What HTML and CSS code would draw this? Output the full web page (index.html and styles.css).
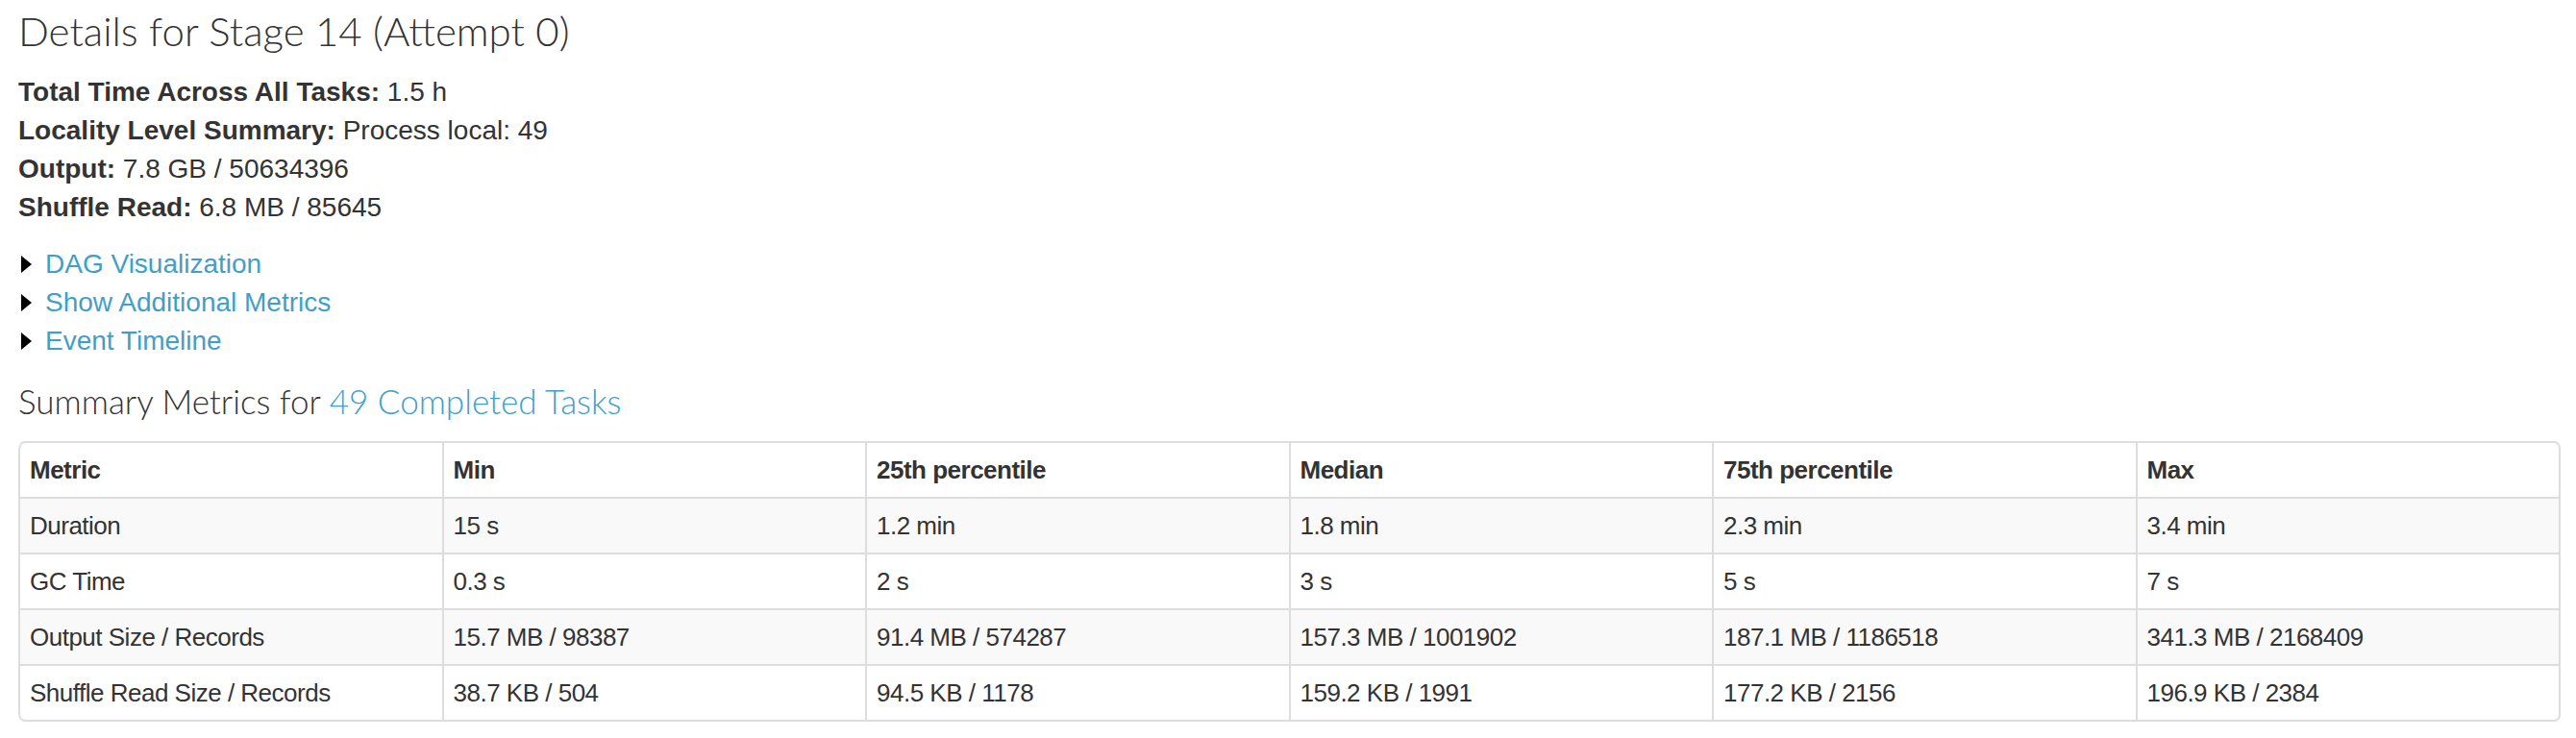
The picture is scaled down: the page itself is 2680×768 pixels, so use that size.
FILE: index.html
```html
<!DOCTYPE html>
<html>
  <head>
    <meta charset="UTF-8" />
    <title>Stage 14 - Details</title>
    <link rel="stylesheet" href="styles.css">
  </head>
  <body>
    <h3 class="stage-title">Details for Stage 14 (Attempt 0)</h3>
    <ul class="stage-summary">
      <li><strong>Total Time Across All Tasks:</strong> 1.5 h</li>
      <li><strong>Locality Level Summary:</strong> Process local: 49</li>
      <li><strong>Output:</strong> 7.8 GB / 50634396</li>
      <li><strong>Shuffle Read:</strong> 6.8 MB / 85645</li>
    </ul>

    <div class="toggles">
      <div class="toggle"><span class="arrow-closed"></span><a href="#">DAG Visualization</a></div>
      <div class="toggle"><span class="arrow-closed"></span><a href="#">Show Additional Metrics</a></div>
      <div class="toggle"><span class="arrow-closed"></span><a href="#">Event Timeline</a></div>
    </div>

    <h4 class="section-title">Summary Metrics for <a href="#tasks">49 Completed Tasks</a></h4>
    <table class="metrics">
      <thead>
        <tr>
          <th>Metric</th>
          <th>Min</th>
          <th>25th percentile</th>
          <th>Median</th>
          <th>75th percentile</th>
          <th>Max</th>
        </tr>
      </thead>
      <tbody>
        <tr>
          <td>Duration</td>
          <td>15 s</td>
          <td>1.2 min</td>
          <td>1.8 min</td>
          <td>2.3 min</td>
          <td>3.4 min</td>
        </tr>
        <tr>
          <td>GC Time</td>
          <td>0.3 s</td>
          <td>2 s</td>
          <td>3 s</td>
          <td>5 s</td>
          <td>7 s</td>
        </tr>
        <tr>
          <td>Output Size / Records</td>
          <td>15.7 MB / 98387</td>
          <td>91.4 MB / 574287</td>
          <td>157.3 MB / 1001902</td>
          <td>187.1 MB / 1186518</td>
          <td>341.3 MB / 2168409</td>
        </tr>
        <tr>
          <td>Shuffle Read Size / Records</td>
          <td>38.7 KB / 504</td>
          <td>94.5 KB / 1178</td>
          <td>159.2 KB / 1991</td>
          <td>177.2 KB / 2156</td>
          <td>196.9 KB / 2384</td>
        </tr>
      </tbody>
    </table>
  </body>
</html>
```

FILE: styles.css
```css
body {
  margin: 0;
  padding: 0 16px 0 19px;
  font-family: "Liberation Sans", Arial, sans-serif;
  font-size: 28px;
  line-height: 40px;
  color: #333;
  background-color: #fff;
}
a {
  color: #3ea0c9;
  text-decoration: none;
}
.stage-title {
  margin: 0;
  font-family: Lato, "Liberation Sans", sans-serif;
  font-weight: 300;
  font-size: 42px;
  line-height: 64px;
}
.stage-summary {
  list-style: none;
  margin: 12px 0 0;
  padding: 0;
}
.toggles {
  margin-top: 19px;
}
.toggle {
  display: flex;
  align-items: center;
}
.arrow-closed {
  width: 0;
  height: 0;
  margin: 0 14px 0 3px;
  border-left: 11px solid #000;
  border-top: 9px solid transparent;
  border-bottom: 9px solid transparent;
}
.section-title {
  margin: 17px 0 0;
  font-family: Lato, "Liberation Sans", sans-serif;
  font-weight: 300;
  font-size: 35px;
  line-height: 50px;
}
.metrics {
  width: 100%;
  margin-top: 17px;
  table-layout: fixed;
  border-collapse: separate;
  border-spacing: 0;
  border: 2px solid #ddd;
  border-left: 0;
  border-radius: 7px;
  font-size: 26px;
  letter-spacing: -0.5px;
}
.metrics th,
.metrics td {
  padding: 8px 10px;
  text-align: left;
  border-left: 2px solid #ddd;
  border-top: 2px solid #ddd;
}
.metrics thead th {
  border-top: 0;
  font-weight: bold;
}
.metrics tbody tr:nth-child(odd) td {
  background-color: #f9f9f9;
}
.metrics thead th:first-child {
  border-top-left-radius: 7px;
}
.metrics tbody tr:last-child td:first-child {
  border-bottom-left-radius: 7px;
}
```
